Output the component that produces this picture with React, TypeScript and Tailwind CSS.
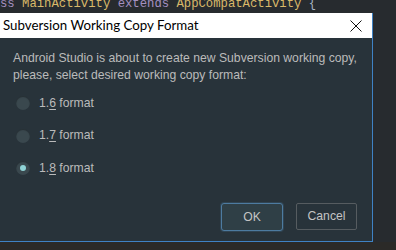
import { useState } from 'react';

const formats = [
  { id: '1.6', pre: '1.', key: '6' },
  { id: '1.7', pre: '1.', key: '7' },
  { id: '1.8', pre: '1.', key: '8' },
];

function Radio({ checked }: { checked: boolean }) {
  return (
    <span className="flex h-[14px] w-[14px] items-center justify-center rounded-full bg-[#3a484e] shadow-[inset_0_1px_1px_rgba(0,0,0,0.35)]">
      {checked && <span className="h-[6px] w-[6px] rounded-full bg-[#8fd3d6]" />}
    </span>
  );
}

export default function App() {
  const [selected, setSelected] = useState('1.8');

  return (
    <div className="relative h-[250px] w-[396px] overflow-hidden bg-[#2b2a28]">
      <div className="h-[13px] overflow-hidden bg-[#272b2f] font-['Liberation_Mono',monospace] text-[12.25px] leading-[13px] whitespace-pre">
        <div className="-mt-[2px]">
          <span className="text-[#a48fc0]">ss </span>
          <span className="text-[#d9b96a]">MainActivity </span>
          <span className="text-[#a48fc0]">extends </span>
          <span className="text-[#d9b96a]">AppCompatActivity </span>
          <span className="text-[#a9b7c6]">{'{'}</span>
        </div>
      </div>
      <div className="flex h-[229px] bg-[#272b2f]">
        {/* dialog window */}
        <div className="flex w-[373px] flex-col border-r border-b border-[#3f82c4] bg-[#28333a]">
          <div className="flex h-[25px] shrink-0 items-center justify-between bg-white pl-[3px] pr-[9px] font-['Lato',sans-serif] text-[13.3px] text-black">
            <span>Subversion Working Copy Format</span>
            <svg width="12" height="12" viewBox="0 0 12 12" className="mr-[1px]">
              <path d="M0.5 0.5L11.5 11.5M11.5 0.5L0.5 11.5" stroke="#111" strokeWidth="1" />
            </svg>
          </div>
          <div className="flex flex-1 flex-col px-[13px] pt-[12px] font-['Liberation_Sans',Arial,sans-serif] text-[12.2px] text-[#bbbbbb]">
            <p className="whitespace-nowrap leading-[17px]">
              Android Studio is about to create new Subversion working copy,
              <br />
              please, select desired working copy format:
            </p>
            <div className="mt-[12px] flex flex-col gap-[18.5px] pl-[3px]">
              {formats.map((f) => (
                <label
                  key={f.id}
                  className="flex h-[14px] cursor-pointer items-center gap-[9px]"
                  onClick={() => setSelected(f.id)}
                >
                  <Radio checked={selected === f.id} />
                  <span>
                    {f.pre}
                    <span className="underline underline-offset-2">{f.key}</span> format
                  </span>
                </label>
              ))}
            </div>
            <div className="mt-auto mb-[10px] flex justify-end gap-[13px] pr-[2px]">
              <button className="h-[28px] w-[62px] rounded-[3px] border border-[#4d7ba0] bg-[#2f3f46] text-[#c4c4c4] shadow-[0_0_0_1px_rgba(70,120,160,0.25)]">
                OK
              </button>
              <button className="h-[27px] w-[61px] rounded-[2px] border border-[#565c60] bg-[#28333a] text-[#c4c4c4]">
                Cancel
              </button>
            </div>
          </div>
        </div>
        <div className="flex-1" />
      </div>
    </div>
  );
}
